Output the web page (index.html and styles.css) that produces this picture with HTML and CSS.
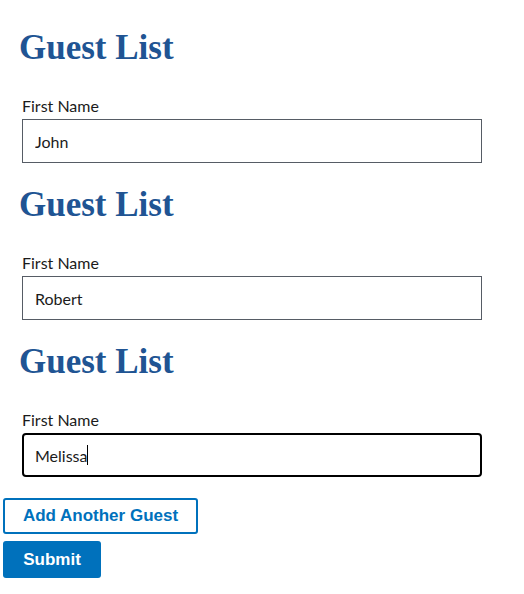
FILE: index.html
```html
<!DOCTYPE html>
<html>
<head>
<meta charset="utf-8">
<link rel="stylesheet" href="styles.css">
</head>
<body>
<form class="form">
  <section class="guest">
    <h2 class="title">Guest List</h2>
    <label class="label" for="g1">First Name</label>
    <input class="input" id="g1" type="text" value="John">
  </section>
  <section class="guest">
    <h2 class="title">Guest List</h2>
    <label class="label" for="g2">First Name</label>
    <input class="input" id="g2" type="text" value="Robert">
  </section>
  <section class="guest">
    <h2 class="title">Guest List</h2>
    <label class="label" for="g3">First Name</label>
    <div class="input focused">Melissa<span class="caret"></span></div>
  </section>
  <div class="actions">
    <button type="button" class="btn btn-outline">Add Another Guest</button>
    <button type="button" class="btn btn-primary">Submit</button>
  </div>
</form>
</body>
</html>
```
FILE: styles.css
```css
* { box-sizing: border-box; }
html, body { margin: 0; padding: 0; background: #fff; }
body { padding: 26px 3px 0; }
.form { display: flex; flex-direction: column; }
.guest { display: flex; flex-direction: column; align-items: flex-start; padding-left: 16px; margin-bottom: 20px; }
.title {
  margin: 2px 0 0;
  font-family: "Liberation Serif", serif;
  font-weight: 700;
  font-size: 35px;
  line-height: 40px;
  color: #205493;
}
.label {
  margin-top: 28px;
  margin-left: 3px;
  font-family: "Lato", sans-serif;
  font-size: 16px;
  line-height: 20px;
  color: #1b1b1b;
}
.input {
  flex-shrink: 0;
  margin-top: 3px;
  margin-left: 3px;
  width: 460px;
  height: 44px;
  border: 1px solid #565c65;
  border-radius: 0;
  padding: 0 12px;
  font-family: "Lato", sans-serif;
  font-size: 16px;
  color: #1b1b1b;
  background: #fff;
  outline: none;
  display: flex;
  align-items: center;
}
.focused { border: 2px solid #000; border-radius: 4px; padding: 0 11px; }
.caret { display: inline-block; width: 1px; height: 20px; background: #000; }
.actions { display: flex; flex-direction: column; align-items: flex-start; gap: 7px; margin-top: 1px; }
.btn {
  font-family: "Liberation Sans", Arial, sans-serif;
  font-weight: 700;
  font-size: 17px;
  border-radius: 3px;
  cursor: pointer;
}
.btn-outline { width: 195px; height: 36px; background: #fff; color: #0071bc; border: 2px solid #0071bc; padding: 0; }
.btn-primary { width: 98px; height: 37px; background: #0071bc; color: #fff; border: none; padding: 0; }
```
